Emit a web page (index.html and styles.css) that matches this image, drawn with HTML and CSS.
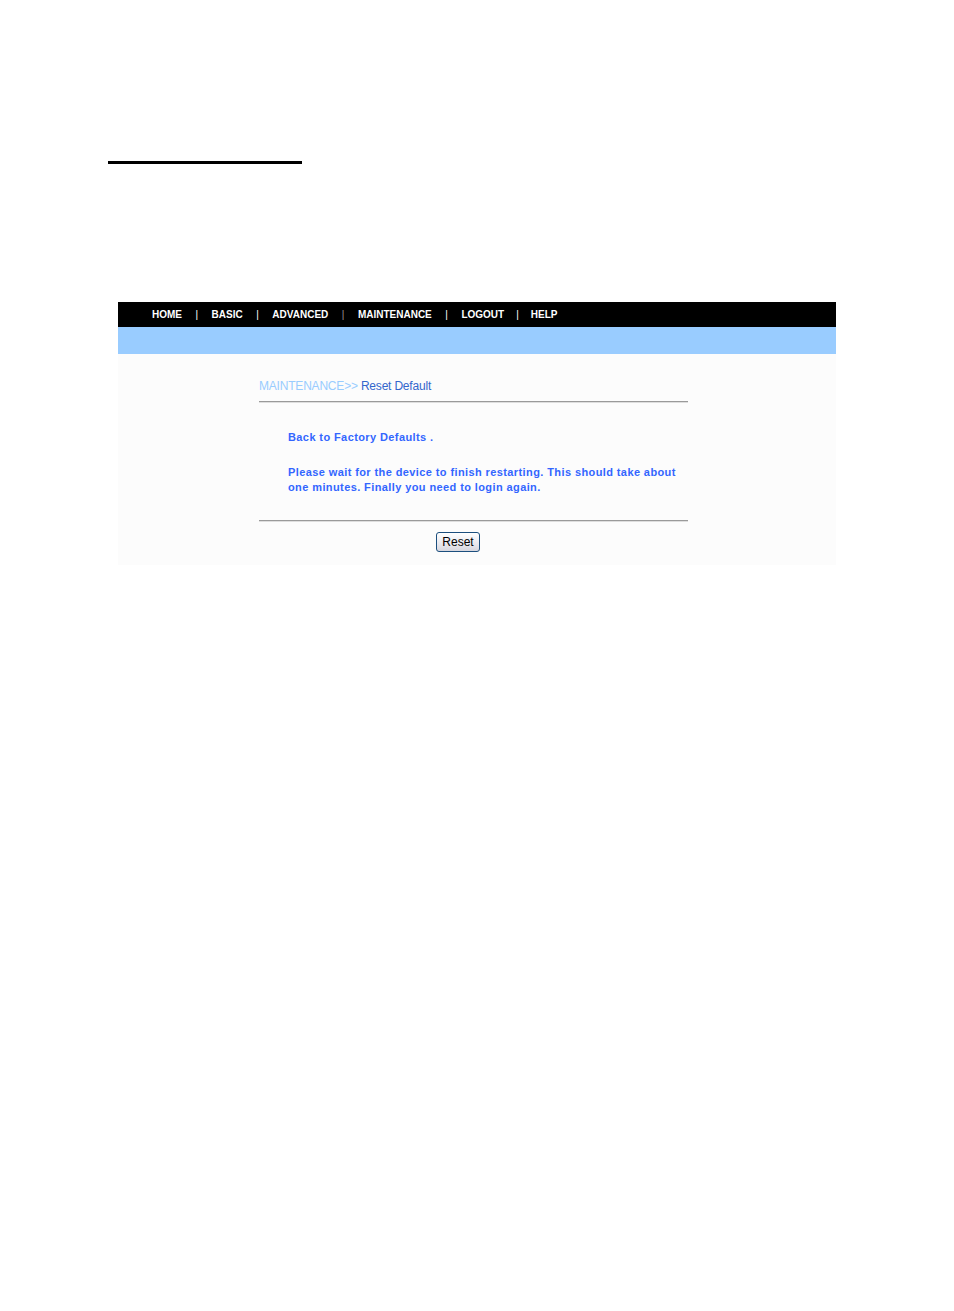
FILE: index.html
```html
<!DOCTYPE html>
<html>
<head>
<meta charset="utf-8">
<title>Reset Default</title>
<link rel="stylesheet" href="styles.css">
</head>
<body>
<div class="top-rule"></div>
<div class="frame">
  <div class="nav">
    <span class="nav-item">HOME</span>
    <span class="sep">|</span>
    <span class="nav-item">BASIC</span>
    <span class="sep">|</span>
    <span class="nav-item">ADVANCED</span>
    <span class="sep dim">|</span>
    <span class="nav-item">MAINTENANCE</span>
    <span class="sep">|</span>
    <span class="nav-item">LOGOUT</span>
    <span class="sep last">|</span>
    <span class="nav-item">HELP</span>
  </div>
  <div class="band"></div>
  <div class="panel">
    <div class="content">
      <div class="crumb"><span class="crumb-light">MAINTENANCE&gt;&gt;</span> <span class="crumb-dark">Reset Default</span></div>
      <div class="rule"></div>
      <p class="msg first">Back to Factory Defaults .</p>
      <p class="msg second">Please wait for the device to finish restarting. This should take about one minutes. Finally you need to login again.</p>
      <div class="rule rule2"></div>
      <div class="actions"><button class="btn" type="button">Reset</button></div>
    </div>
  </div>
</div>
</body>
</html>
```
FILE: styles.css
```css
html, body {
  margin: 0;
  padding: 0;
  background: #ffffff;
  font-family: "Liberation Sans", Arial, sans-serif;
}

.top-rule {
  margin: 161px 0 0 108px;
  width: 194px;
  height: 3px;
  background: #000000;
}

.frame {
  margin: 138px 0 0 118px;
  width: 718px;
}

.nav {
  height: 25px;
  background: #000000;
  display: flex;
  align-items: center;
  padding-left: 34px;
  gap: 13.5px;
  color: #ffffff;
  font-size: 10px;
  font-weight: bold;
  line-height: 25px;
}

.sep {
  font-weight: normal;
  font-size: 10px;
  color: #ffffff;
}

.sep.dim {
  color: #9a9a9a;
}

.sep.last {
  margin: 0 -1.5px;
}

.band {
  height: 27px;
  background: #99ccff;
}

.panel {
  background: #fcfcfc;
  padding: 24px 0 13px 141px;
}

.content {
  width: 429px;
}

.crumb {
  font-size: 12px;
  line-height: 16px;
  letter-spacing: -0.2px;
}

.crumb-light {
  color: #99ccff;
}

.crumb-dark {
  color: #3366cc;
}

.rule {
  margin-top: 7px;
  height: 1px;
  background: #9a9a9a;
  border-bottom: 1px solid #dedede;
}

.msg {
  margin: 0;
  padding-left: 29px;
  font-size: 11px;
  font-weight: bold;
  line-height: 15px;
  color: #3366ff;
  letter-spacing: 0.4px;
}

.msg.first {
  margin-top: 27px;
}

.msg.second {
  margin-top: 20px;
}

.rule2 {
  margin-top: 25px;
}

.actions {
  display: flex;
  justify-content: center;
  margin-top: 10px;
  padding-right: 31px;
}

.btn {
  font-family: "Liberation Sans", Arial, sans-serif;
  font-size: 12px;
  line-height: 16px;
  height: 20px;
  width: 44px;
  padding: 0;
  color: #000000;
  border: 1px solid #1c4f7e;
  border-radius: 3px;
  background: linear-gradient(#ffffff, #e8e8ee 60%, #d6d6de);
}
```
